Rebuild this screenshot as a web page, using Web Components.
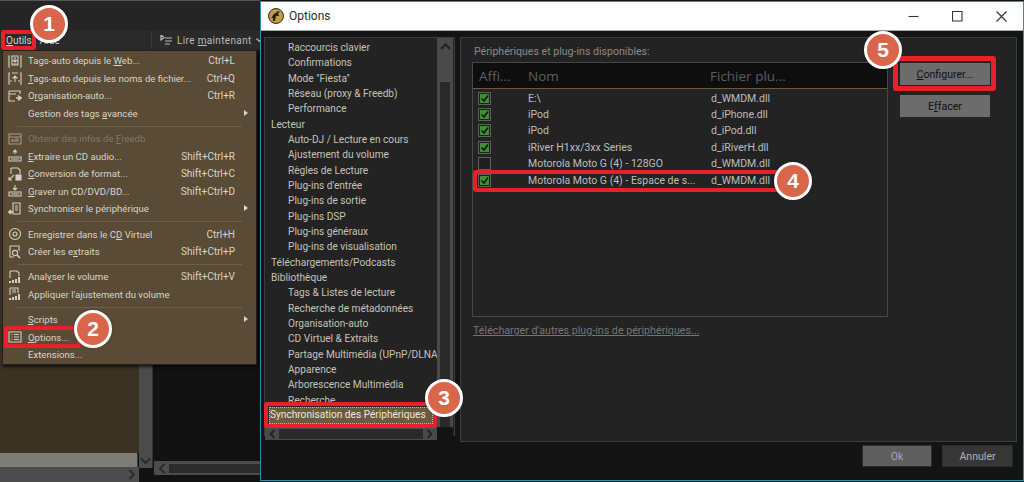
<!DOCTYPE html>
<html lang="fr"><head><meta charset="utf-8"><title>Options</title>
<style>html,body{margin:0;padding:0;background:#121212;overflow:hidden}body{width:1024px;height:482px;font-family:Roboto,"Liberation Sans",sans-serif}</style>
</head><body>
<x-desktop>
  <x-app>
    <span slot="menubar"><u>O</u>utils</span>
    <span slot="menubar">Aide</span>
  </x-app>
  <x-menu>
    <x-item icon="tagweb" shortcut="Ctrl+L">Tags-auto depuis le <u>W</u>eb...</x-item>
    <x-item icon="tagfile" shortcut="Ctrl+Q"><u>T</u>ags-auto depuis les noms de fichier...</x-item>
    <x-item icon="org" shortcut="Ctrl+R">O<u>r</u>ganisation-auto...</x-item>
    <x-item arrow>Gestion des tags <u>a</u>vancée</x-item>
    <x-sep></x-sep>
    <x-item icon="freedb" disabled>Obtenir des infos de <u>F</u>reedb</x-item>
    <x-item icon="rip" shortcut="Shift+Ctrl+R"><u>E</u>xtraire un CD audio...</x-item>
    <x-item icon="conv" shortcut="Shift+Ctrl+C"><u>C</u>onversion de format...</x-item>
    <x-item icon="burn" shortcut="Shift+Ctrl+D"><u>G</u>raver un CD/DVD/BD...</x-item>
    <x-item icon="sync" arrow>Synchroniser le périphérique</x-item>
    <x-sep></x-sep>
    <x-item icon="disc" shortcut="Ctrl+H">Enregistrer dans le C<u>D</u> Virtuel</x-item>
    <x-item icon="search" shortcut="Shift+Ctrl+P">Créer les e<u>x</u>traits</x-item>
    <x-sep></x-sep>
    <x-item icon="level" shortcut="Shift+Ctrl+V">Anal<u>y</u>ser le volume</x-item>
    <x-item icon="level2">Appliquer l'a<u>j</u>ustement du volume</x-item>
    <x-sep></x-sep>
    <x-item arrow><u>S</u>cripts</x-item>
    <x-item icon="opts"><u>O</u>ptions...</x-item>
    <x-item>Extensions...</x-item>
  </x-menu>
  <x-options>
    <x-tree slot="tree">
      <x-node child>Raccourcis clavier</x-node>
      <x-node child>Confirmations</x-node>
      <x-node child>Mode "Fiesta"</x-node>
      <x-node child>Réseau (proxy &amp; Freedb)</x-node>
      <x-node child>Performance</x-node>
      <x-node>Lecteur</x-node>
      <x-node child>Auto-DJ / Lecture en cours</x-node>
      <x-node child>Ajustement du volume</x-node>
      <x-node child>Règles de Lecture</x-node>
      <x-node child>Plug-ins d'entrée</x-node>
      <x-node child>Plug-ins de sortie</x-node>
      <x-node child>Plug-ins DSP</x-node>
      <x-node child>Plug-ins généraux</x-node>
      <x-node child>Plug-ins de visualisation</x-node>
      <x-node>Téléchargements/Podcasts</x-node>
      <x-node>Bibliothèque</x-node>
      <x-node child>Tags &amp; Listes de lecture</x-node>
      <x-node child>Recherche de métadonnées</x-node>
      <x-node child>Organisation-auto</x-node>
      <x-node child>CD Virtuel &amp; Extraits</x-node>
      <x-node child>Partage Multimédia (UPnP/DLNA)</x-node>
      <x-node child>Apparence</x-node>
      <x-node child>Arborescence Multimédia</x-node>
      <x-node child>Recherche</x-node>
      <x-node selected>Synchronisation des Périphériques</x-node>
    </x-tree>
    <x-device checked name="E:\" file="d_WMDM.dll" slot="rows"></x-device>
    <x-device checked name="iPod" file="d_iPhone.dll" slot="rows"></x-device>
    <x-device checked name="iPod" file="d_iPod.dll" slot="rows"></x-device>
    <x-device checked name="iRiver H1xx/3xx Series" file="d_iRiverH.dll" slot="rows"></x-device>
    <x-device name="Motorola Moto G (4) - 128GO" file="d_WMDM.dll" slot="rows"></x-device>
    <x-device checked name="Motorola Moto G (4) - Espace de s..." file="d_WMDM.dll" slot="rows"></x-device>
    <x-btn slot="side"><u>C</u>onfigurer...</x-btn>
    <x-btn slot="side">E<u>f</u>facer</x-btn>
    <x-btn slot="foot" tone="on">Ok</x-btn>
    <x-btn slot="foot" tone="off">Annuler</x-btn>
  </x-options>
  <x-mark style="left:1px;top:30px;width:35px;height:20px"></x-mark>
  <x-mark style="left:4px;top:326px;width:77px;height:22px"></x-mark>
  <x-mark style="left:264px;top:402px;width:173px;height:26px"></x-mark>
  <x-mark style="left:473px;top:170px;width:310px;height:22px"></x-mark>
  <x-mark style="left:893px;top:56px;width:103px;height:35px;border-width:5px"></x-mark>
  <x-badge style="left:30px;top:5px">1</x-badge>
  <x-badge style="left:74px;top:310px">2</x-badge>
  <x-badge style="left:425px;top:379px">3</x-badge>
  <x-badge style="left:774px;top:162px">4</x-badge>
  <x-badge style="left:864px;top:31px">5</x-badge>
</x-desktop>
<script>
const FONT='Roboto,"Liberation Sans",sans-serif';
function def(name,css,html){
  customElements.define(name,class extends HTMLElement{
    constructor(){super();const r=this.attachShadow({mode:'open'});r.innerHTML='<style>'+css+'</style>'+(typeof html==='function'?'':html);}
    connectedCallback(){if(typeof html==='function'&&!this._d){this._d=1;this.shadowRoot.innerHTML+=html(this);}}
  });
}
const ICONS={
 tagweb:'<path d="M2 2H1v11h1M12 2h1v11h-1M4 2h6v9H4z"/><path d="M7 3v5M5 6l2 2 2-2M5 10h4"/>',
 tagfile:'<path d="M2 2H1v11h1M12 2h1v11h-1M4 2h6"/><path d="M7 11V5M4.5 7.5 7 5l2.5 2.5M4 10H2M10 10h2" />',
 org:'<path d="M1 2h11v3M1 2v10h6M1 5h7"/><path d="M8 9h4M10 6.5 13 9l-3 2.5" stroke-width="1.6"/>',
 freedb:'<path d="M1 2h12v10H1zM1 5h12"/><path d="M4 10V8h2v2M8 10V7h2v3"/>',
 rip:'<path d="M7 1v4M5 3.5 7 1l2 2.5M1 8h12v4H1zM3 10h8"/>',
 conv:'<path d="M3 1h7l2 2v4M3 1v6M1 13l5-5M4 13H1v-3"/><path d="M8 8h5v5H8z" fill="currentColor"/>',
 burn:'<path d="M7 6V1M5 4l2 2 2-2M1 8h12v4H1zM3 10h8"/>',
 sync:'<path d="M5 1h7v11H5zM7 4h3M7 6h3M7 8h3"/><path d="M1 10h4M3 8 .8 10 3 12" stroke-width="1.6"/>',
 disc:'<circle cx="7" cy="7" r="5.5"/><circle cx="7" cy="7" r="2"/>',
 search:'<path d="M2 1h9v5M2 1v11h4"/><circle cx="7" cy="8" r="2.6"/><path d="m9 10 3 3" stroke-width="1.6"/>',
 level:'<path d="M2 1h7l2 2v3M2 1v7"/><path d="M2 13v-2M5 13v-3M8 13V9M11 13V7" stroke-width="2"/>',
 level2:'<path d="M2 1h8v5M2 1v7M4 3h4M4 5h4"/><path d="M2 13v-2M5 13v-3M8 13V9M11 13V7" stroke-width="2"/>',
 opts:'<path d="M1 2h12v10H1zM3.5 4.5h1M6 4.5h5M3.5 7h1M6 7h5M3.5 9.5h1M6 9.5h5"/>'
};
def('x-desktop',':host{display:block;position:relative;width:1024px;height:482px;overflow:hidden;font:10px '+FONT+'}','<slot></slot>');
def('x-app',`:host{display:flex;flex-direction:column;width:260px;height:482px;background:#121212}
 .top{height:30px;background:#252525;border-top:1px solid #555;box-sizing:border-box}
 .bar{height:20px;background:#2a2a2a;display:flex;align-items:center;padding-left:6px;gap:8px;color:#d6d2c8;font-size:10px}
 .tb{margin-left:auto;width:109px;box-sizing:border-box;display:flex;align-items:center;gap:4px;padding:0 0 0 8px;height:18px;border-left:1px solid #3c3c3c;white-space:nowrap;font-size:10px;letter-spacing:.35px;color:#bbb}
 .tb svg{flex:none}
 ::slotted(span){display:block}
 .body{flex:1;display:flex;min-height:0}
 .left{width:139px;display:flex;flex-direction:column}
 .olive{flex:1;background:#3b3224}
 .g{height:14px;background:#7d7d76;border-right:1px solid #3a3a3a;margin-right:1px}
 .hs{height:15px;background:#4c4c4c;display:flex;align-items:center;justify-content:flex-end;padding-right:3px}
 .vs{width:14px;background:#4c4c4c;display:flex;flex-direction:column;justify-content:flex-end;align-items:center;padding-bottom:3px;box-sizing:border-box;border-right:1px solid #333}
 .col{display:flex;flex-direction:column;width:14px}
 .rest{flex:1;display:flex;flex-direction:column;justify-content:flex-end;padding-bottom:7px;padding-left:1px}
 .hs2{height:14px;background:#4c4c4c;display:flex;align-items:center;padding-left:4px;gap:3px}
 .hs2 i{flex:1;height:9px;background:#2c2c2c}
 svg{display:block;fill:none;stroke:#2b2b2b;stroke-width:2}`,
 `<div class="top"></div><div class="bar"><slot name="menubar"></slot>
 <div class="tb"><svg width="13" height="10" viewBox="0 0 13 10" style="stroke:#bbb;stroke-width:1.2"><path d="M1 0v5l3-2.500zM5 3h7M5 6h7M5 9h5"/></svg><span>Lire <u>m</u>aintenant</span><svg width="7" height="5" viewBox="0 0 7 5" style="stroke:#bbb;stroke-width:1.2"><path d="m.500 .5 3 3 3-3"/></svg></div></div>
 <div class="body"><div class="left"><div class="olive"></div><div class="g"></div><div class="hs"><svg width="8" height="11" viewBox="0 0 8 11"><path d="m1.500 1 4.500 4.500L1.500 10"/></svg></div></div>
 <div class="col"><div class="vs" style="flex:1"><svg width="11" height="8" viewBox="0 0 11 8"><path d="m1 1.500 4.500 4.500L10 1.500"/></svg></div><div style="height:14px;background:#121212"></div></div>
 <div class="rest"><div class="hs2"><svg width="8" height="11" viewBox="0 0 8 11"><path d="M6.500 1 2 5.500 6.500 10"/></svg><i></i></div></div></div>`);
def('x-menu',`:host{position:absolute;left:2px;top:50px;width:255px;height:315px;box-sizing:border-box;background:#594b35;border:1px solid #26221a;box-shadow:1px 2px 3px rgba(0,0,0,.7);display:flex;flex-direction:column;padding-top:1px;color:#d9d5ca;font-size:10px}`,'<slot></slot>');
def('x-item',`:host{display:flex;align-items:center;height:17.5px;flex:none;white-space:nowrap;position:relative;padding-left:5px}
 .ic{width:14px;height:14px;flex:none;margin-right:6px;color:#d5d0c4}
 .ic svg{display:block;fill:none;stroke:currentColor;stroke-width:1.1}
 .lb{flex:1;font-size:9.600px}.sc{margin-right:21px}
 .ar{position:absolute;left:241px;top:5px;width:0;height:0;border-left:4px solid #d9d5ca;border-top:3.500px solid transparent;border-bottom:3.500px solid transparent}
 :host([disabled]){color:#837866}:host([disabled]) .ic{color:#a89d88}`,
 e=>`<span class="ic">${e.getAttribute('icon')?`<svg width="14" height="14" viewBox="0 0 14 14">${ICONS[e.getAttribute('icon')]}</svg>`:''}</span><span class="lb"><slot></slot></span>${e.hasAttribute('shortcut')?`<span class="sc">${e.getAttribute('shortcut')}</span>`:''}${e.hasAttribute('arrow')?'<span class="ar"></span>':''}`);
def('x-sep',':host{display:block;flex:none;height:7.900px;padding-left:14px;padding-right:14px}div{margin-top:3.500px;height:1px;background:#6d5f48}','<div></div>');
def('x-options',`:host{position:absolute;left:260px;top:1px;width:764px;height:480px;box-sizing:border-box;border:1px solid #2a93b3;background:#141414;display:flex;flex-direction:column}
 .title{height:29px;flex:none;background:#fff;border-bottom:1px solid #a8a8a8;box-sizing:border-box;display:flex;align-items:center;padding-left:7px;color:#2a2a2a;font-size:12px}
 .title .t{margin-left:5px}
 .ctl{margin-left:auto;display:flex;height:100%;align-items:center}
 .ctl svg{display:block;fill:none;stroke:#333;stroke-width:1.100}
 .ctl span{width:44px;display:flex;justify-content:center}
 .main{height:405px;flex:none;display:flex;gap:5px;padding:6px 6px 0 3px;box-sizing:border-box}
 .treep{width:191px;box-sizing:border-box;border:1px solid #3d3d3d;background:#232323;display:grid;grid-template-columns:172px 16px;grid-template-rows:1fr 13px}
 .vsb{background:#4a4a4a;display:flex;flex-direction:column;align-items:center;padding-top:5px;grid-column:2;grid-row:1}
 .vsb i{display:block;width:10px;flex:1;background:#2a2a2a;margin-top:32px}
 .vsb svg,.hsb svg{display:block;fill:none;stroke:#222;stroke-width:2;flex:none}
 .hsb{background:#4a4a4a;display:flex;align-items:center;padding:0 3px;gap:3px;grid-column:1;grid-row:2}
 .hsb i{flex:1;height:10px;background:#2a2a2a}
 .corner{background:#141414;grid-column:2;grid-row:2}
 ::slotted([slot=tree]){grid-column:1;grid-row:1}
 .panel{flex:1;box-sizing:border-box;border:1px solid #3d3d3d;background:#232323;padding:7px 0 0 11px;display:flex;gap:12px;height:405px}
 .lc{width:416px;display:flex;flex-direction:column}
 .lbl{color:#8a8a8a;font-size:10.600px;height:17px;line-height:14px;padding-left:2px}
 .list{height:255px;box-sizing:border-box;border:1px solid #484848;display:flex;flex-direction:column;flex:none}
 .head{height:25px;flex:none;background:#0e0e0e;border-bottom:1px solid #6b5a3a;display:flex;align-items:center;color:#5c5f63;font:13.500px "Open Sans",sans-serif;white-space:nowrap}
 .head span:nth-child(1){width:55px;padding-left:6px;box-sizing:border-box}
 .head span:nth-child(2){width:182px}
 .rows{padding-top:1px;display:flex;flex-direction:column}
 .link{margin-top:7px;padding-left:1px;color:#757575;text-decoration:underline;font-size:10.700px}
 .side{padding-top:18px;display:flex;flex-direction:column;gap:10px;width:91px}
 .foot{flex:1;display:flex;justify-content:flex-end;gap:10px;align-items:flex-start;padding:9px 10px 0 0}`,
 `<div class="title"><svg width="16" height="16" viewBox="0 0 16 16"><circle cx="8" cy="8" r="7.500" fill="#c79a3f" stroke="#2a2a2a"/><path d="M3 10c2-1 2-5 5-5 1-2 3-2 4-1-1 0-1 1-2 1l1 3-3 0-1 5-2 0 0-3z" fill="#222"/></svg><span class="t">Options</span>
 <div class="ctl"><span><svg width="11" height="11" viewBox="0 0 11 11"><path d="M.5 5.500h10"/></svg></span><span><svg width="11" height="11" viewBox="0 0 11 11"><path d="M.5.500h9.500v9.500H.5z"/></svg></span><span><svg width="11" height="11" viewBox="0 0 11 11"><path d="m.5.500 10 10M10.500.500l-10 10"/></svg></span></div></div>
 <div class="main"><div class="treep"><slot name="tree"></slot><div class="vsb"><svg width="11" height="7" viewBox="0 0 11 7"><path d="m1 6 4.500-4.500L10 6"/></svg><i></i></div>
 <div class="hsb"><svg width="8" height="10" viewBox="0 0 8 10"><path d="M6.500 1 2.500 5l4 4"/></svg><i></i><svg width="8" height="10" viewBox="0 0 8 10"><path d="m1.500 1 4 4-4 4"/></svg></div><div class="corner"></div></div>
 <div class="panel"><div class="lc"><div class="lbl">Périphériques et plug-ins disponibles:</div>
 <div class="list"><div class="head"><span>Affi...</span><span>Nom</span><span>Fichier plu...</span></div><div class="rows"><slot name="rows"></slot></div></div>
 <div class="link">Télécharger d'autres plug-ins de périphériques...</div></div>
 <div class="side"><slot name="side"></slot></div></div></div>
 <div class="foot"><slot name="foot"></slot></div>`);
def('x-tree',':host{display:flex;flex-direction:column;overflow:hidden;padding-top:2px;font-size:10.150px;color:#c6c2b6;height:389px;box-sizing:border-box;min-width:0}','<slot></slot>');
def('x-node',`:host{display:block;height:15.330px;line-height:15.330px;flex:none;white-space:nowrap;padding-left:6px;box-sizing:border-box}
 :host([child]){padding-left:23px}
 :host([selected]){height:17px;line-height:16px;margin:-1px 4px 0 4px;padding-left:1px;background:#6b5b3e;outline:1px dotted #bdb6a4;outline-offset:-1px;color:#ece8dc;position:relative}`,'<slot></slot>');
def('x-device',`:host{display:flex;align-items:center;height:16.400px;flex:none;color:#bdbdbd;font-size:10.500px;white-space:nowrap}
 .cb{width:13px;height:13px;box-sizing:border-box;border:1px solid #5f5f5f;margin:0 37px 0 5px;background:#1f1f1f;flex:none;padding:1px}
 .cb svg{display:block}
 .n{width:183px;overflow:hidden}`,
 e=>`<span class="cb">${e.hasAttribute('checked')?'<svg width="9" height="9" viewBox="0 0 9 9"><rect width="9" height="9" fill="#3f8f36"/><path d="m1.500 4.500 2.500 2.500 4-5.500" fill="none" stroke="#101010" stroke-width="1.500"/></svg>':''}</span><span class="n">${e.getAttribute('name')}</span><span>${e.getAttribute('file')}</span>`);
def('x-btn',`:host{display:flex;align-items:center;justify-content:center;width:90px;height:22px;background:#6c6c6c;color:#111;font-size:10.600px;flex:none;box-sizing:border-box}
 :host([tone=on]){width:70px;background:#5f5f5f;color:#a8a8a8;border:1px solid #2c2c2c}
 :host([tone=off]){width:71px;background:#363636;color:#b2b2b2;border:1px solid #2c2c2c}`,'<slot></slot>');
def('x-mark',':host{position:absolute;box-sizing:border-box;border:4px solid #e8202c;border-radius:3px}','');
def('x-badge',`:host{position:absolute;width:38px;height:38px;box-sizing:border-box;border:3px solid #fff;border-radius:50%;background:#d9654a;color:#fff;font:bold 21px "Liberation Sans",sans-serif;display:flex;align-items:center;justify-content:center;box-shadow:0 0 2px rgba(0,0,0,.4)}`,'<slot></slot>');
</script>
</body></html>
